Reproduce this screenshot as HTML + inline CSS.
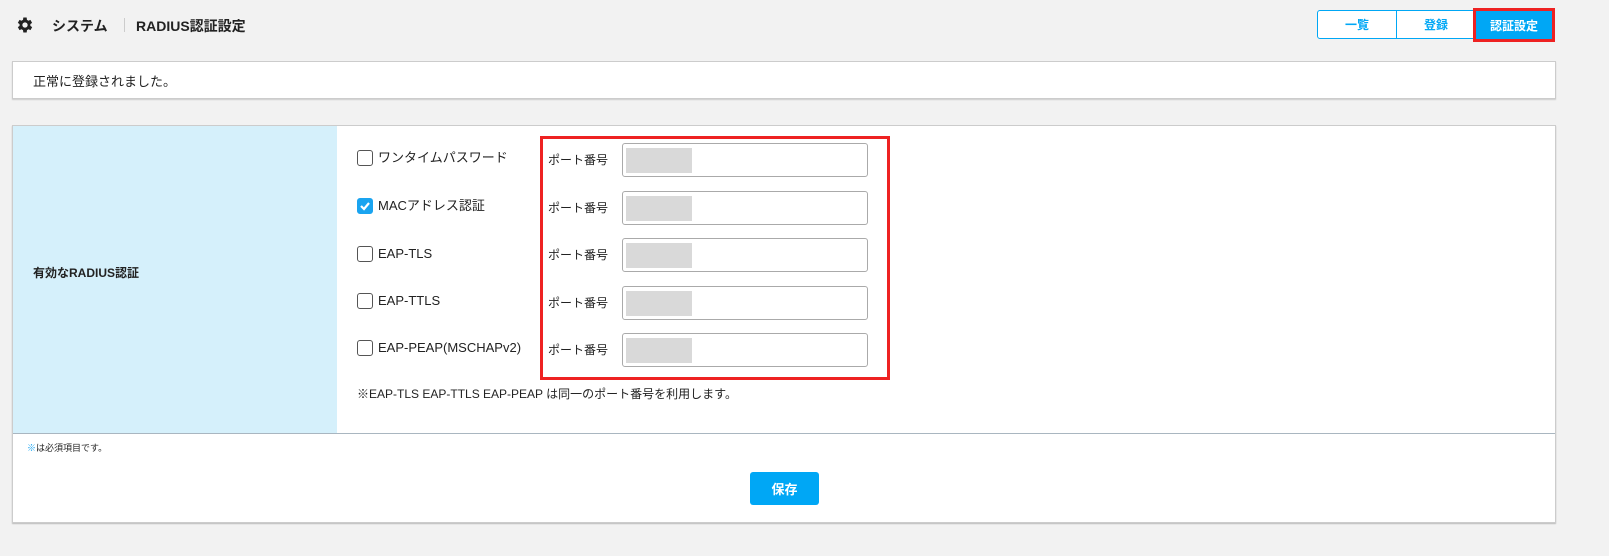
<!DOCTYPE html>
<html><head><meta charset="utf-8"><style>
*{box-sizing:border-box;margin:0;padding:0}
body{width:1609px;height:556px;background:#f2f2f2;font-family:"Liberation Sans","Noto Sans CJK JP",sans-serif;color:#222;position:relative;overflow:hidden;font-size:13px}
.a{position:absolute}
.btn{position:absolute;top:10px;height:29px;border:1px solid #00a7f5;background:#fff;color:#00a7f5;font-weight:bold;font-size:12px;display:flex;align-items:center;justify-content:center}
.cb{position:absolute;left:357px;width:16px;height:16px;border:1px solid #555;border-radius:3px;background:#fff}
.lb{position:absolute;left:378px;font-size:13px;line-height:16px}
.pt{position:absolute;left:548px;font-size:12px}
.in{position:absolute;left:622px;width:246px;height:34px;border:1px solid #aaa;border-radius:3px;background:#fff}
.in i{position:absolute;left:3px;top:4px;width:66px;height:25px;background:#d9d9d9}
</style></head><body>
<svg class="a" style="left:15px;top:15px" width="20" height="20" viewBox="0 0 24 24"><path fill="#222" fill-rule="evenodd" d="M19.4 13a7.5 7.5 0 000-2l2.1-1.6-2-3.5-2.5 1a7.6 7.6 0 00-1.7-1L15 3h-4l-.4 2.9a7.6 7.6 0 00-1.7 1l-2.5-1-2 3.5L6.5 11a7.5 7.5 0 000 2l-2.1 1.6 2 3.5 2.5-1a7.6 7.6 0 001.7 1L11 21h4l.4-2.9a7.6 7.6 0 001.7-1l2.5 1 2-3.5zM13 15.2a3.2 3.2 0 110-6.4 3.2 3.2 0 010 6.4z" transform="translate(-1 0)"/></svg>
<div class="a" style="left:52px;top:16px;font-size:14px;font-weight:bold">システム</div>
<div class="a" style="left:124px;top:18px;width:1px;height:14px;background:#ccc"></div>
<div class="a" style="left:136px;top:16px;font-size:14px;font-weight:bold">RADIUS認証設定</div>
<div class="btn" style="left:1317px;width:80px;border-radius:3px 0 0 3px">一覧</div>
<div class="btn" style="left:1396px;width:80px">登録</div>
<div class="a" style="left:1473px;top:8px;width:82px;height:34px;border:3px solid #ee2222;background:#00a7f5;color:#fff;font-weight:bold;font-size:12px;display:flex;align-items:center;justify-content:center">認証設定</div>
<div class="a" style="left:12px;top:61px;width:1544px;height:38px;background:#fff;border:1px solid #ccc;box-shadow:0 1px 1px #ccc"></div>
<div class="a" style="left:33px;top:71px;font-size:13px">正常に登録されました。</div>
<div class="a" style="left:12px;top:125px;width:1544px;height:398px;background:#fff;border:1px solid #ccc;box-shadow:0 1px 1px #bbb"></div>
<div class="a" style="left:13px;top:126px;width:324px;height:308px;background:#d5f0fb"></div>
<div class="a" style="left:13px;top:433px;width:1542px;height:1px;background:#a9b6c0"></div>
<div class="a" style="left:33px;top:264px;font-size:12px;font-weight:bold">有効なRADIUS認証</div>
<div class="cb" style="top:150px"></div><div class="lb" style="top:150px">ワンタイムパスワード</div>
<div class="cb" style="top:198px;background:#1aa4f0;border-color:#1aa4f0"><svg width="14" height="14" viewBox="0 0 14 14" style="position:absolute;left:0;top:0"><path d="M3 7l3 3 5-6" stroke="#fff" stroke-width="2.2" fill="none"/></svg></div><div class="lb" style="top:198px">MACアドレス認証</div>
<div class="cb" style="top:246px"></div><div class="lb" style="top:246px">EAP-TLS</div>
<div class="cb" style="top:293px"></div><div class="lb" style="top:293px">EAP-TTLS</div>
<div class="cb" style="top:340px"></div><div class="lb" style="top:340px">EAP-PEAP(MSCHAPv2)</div>
<div class="pt" style="top:151px">ポート番号</div><div class="in" style="top:143px"><i></i></div>
<div class="pt" style="top:199px">ポート番号</div><div class="in" style="top:191px"><i></i></div>
<div class="pt" style="top:246px">ポート番号</div><div class="in" style="top:238px"><i></i></div>
<div class="pt" style="top:294px">ポート番号</div><div class="in" style="top:286px"><i></i></div>
<div class="pt" style="top:341px">ポート番号</div><div class="in" style="top:333px"><i></i></div>
<div class="a" style="left:540px;top:136px;width:350px;height:244px;border:3px solid #ee2222"></div>
<div class="a" style="left:357px;top:385px;font-size:12px">※EAP-TLS EAP-TTLS EAP-PEAP は同一のポート番号を利用します。</div>
<div class="a" style="left:27px;top:441px;font-size:9px"><span style="color:#1aa4f0">※</span>は必須項目です。</div>
<div class="a" style="left:750px;top:472px;width:69px;height:33px;background:#00a7f5;border-radius:3px;color:#fff;font-weight:bold;font-size:13px;display:flex;align-items:center;justify-content:center">保存</div>
</body></html>
